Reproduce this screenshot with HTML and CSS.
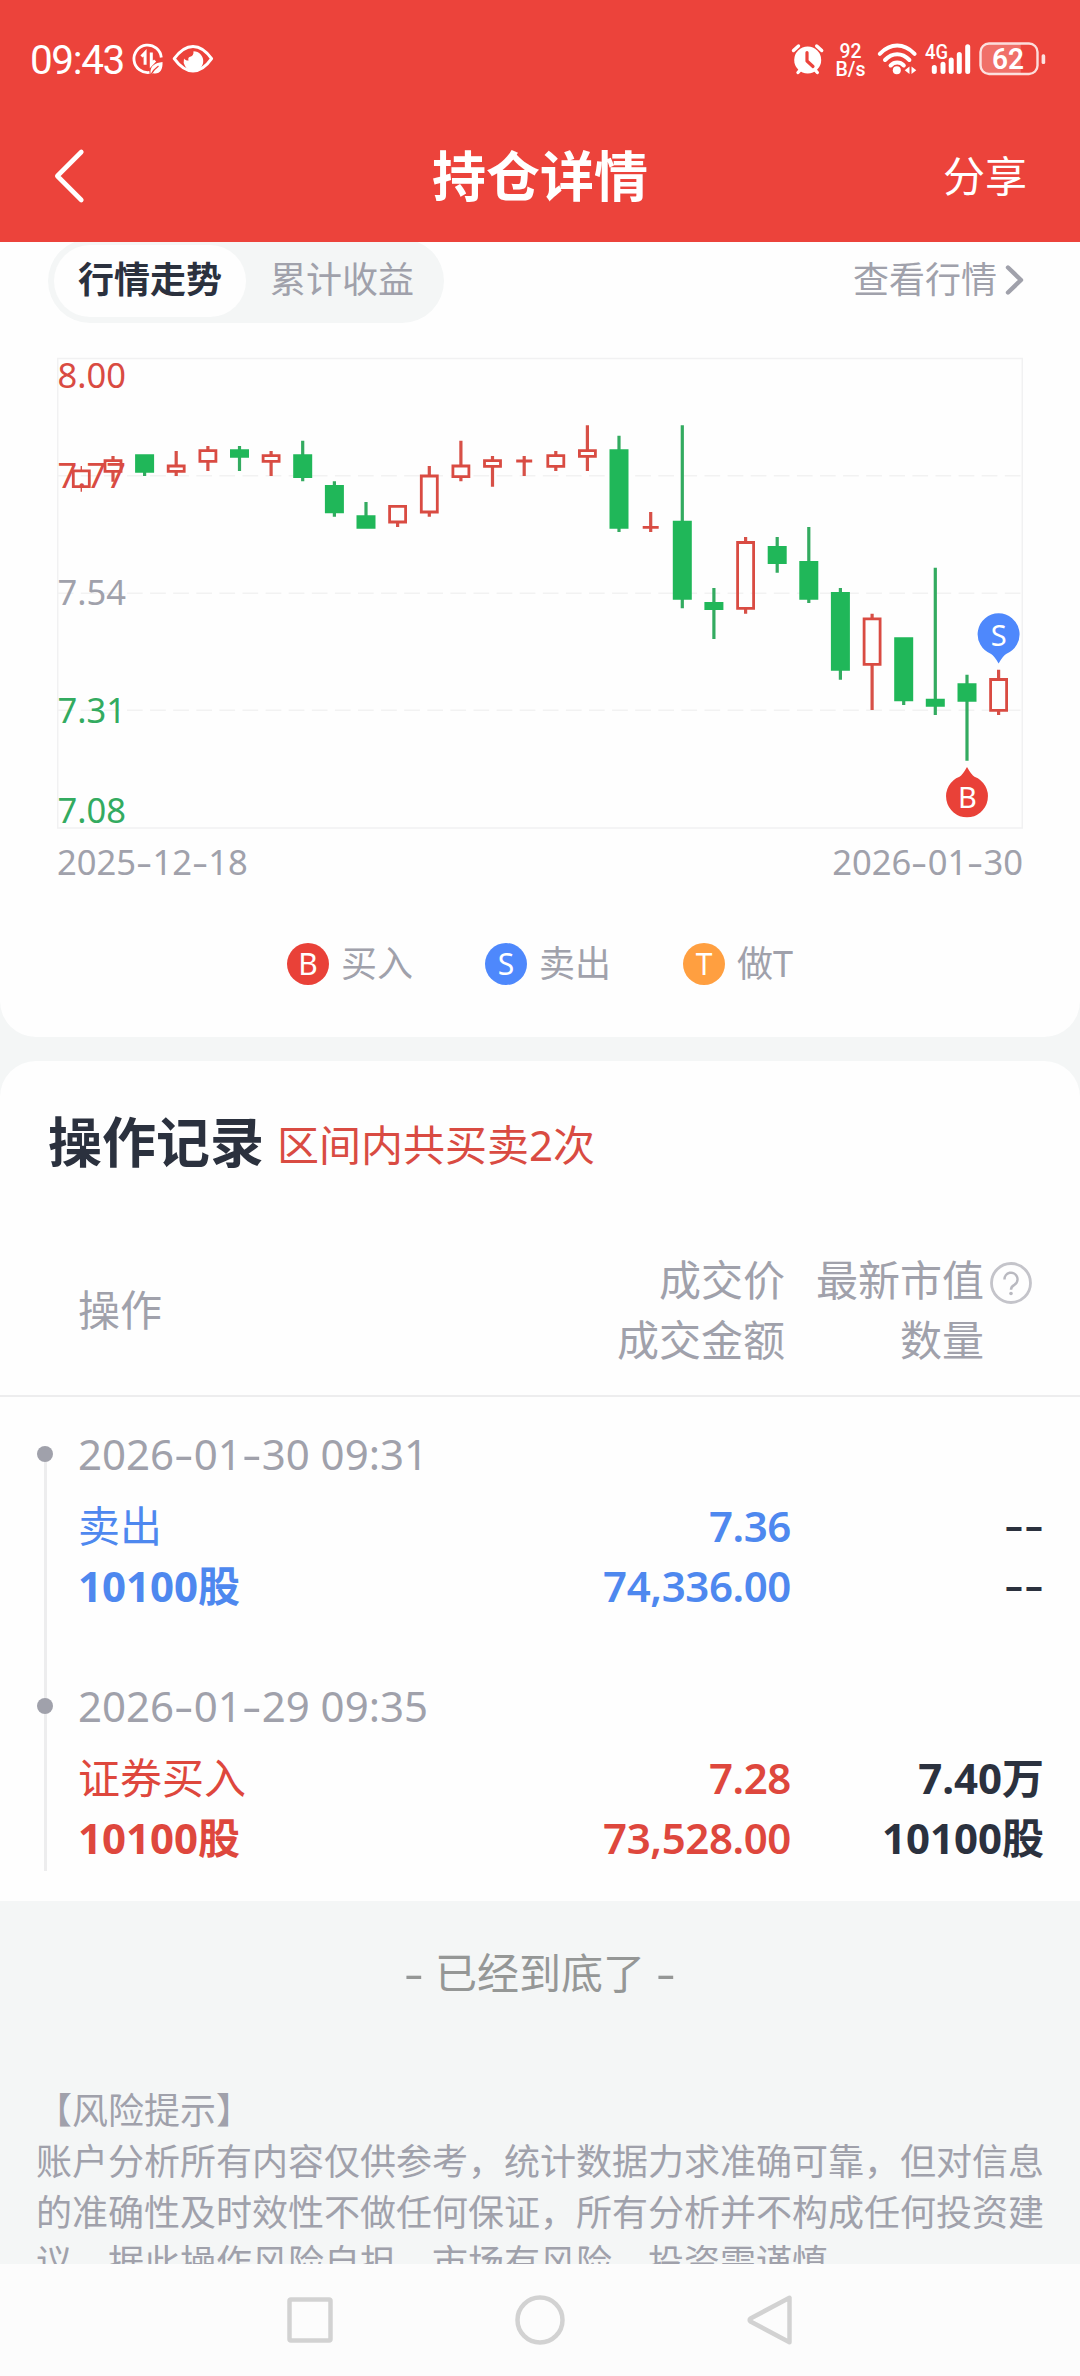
FILE: index.html
```
<!DOCTYPE html>
<html lang="zh-CN">
<head>
<meta charset="utf-8">
<title>持仓详情</title>
<link rel="stylesheet" href="styles.css">
</head>
<body>
<div class="screen">
  <header class="top">
    <div class="status">
      <div class="status-left">
        <span class="clock">09:43</span>
        <svg class="status-icons-left" width="90" height="40" viewBox="130 39 90 40">
          <g fill="none" stroke="#fff" stroke-width="2.8">
            <path d="M161.3 57.5A13.7 13.7 0 1 0 149.5 72.4"/>
            <path d="M141.5 56.5l3.6-3.8v12M151.3 52.5v12l3.8-4" stroke-width="3"/>
          </g>
          <path d="M150.5 73.5c-.5-8 4.500-10.500 12-11.500c.5 8-3 12.800-9.500 11.300l-1.500 1z" fill="#fff"/>
          <path d="M151 74.500c2-4 4-6 7.500-8.500" stroke="#ec433b" stroke-width="1.200" fill="none"/>
          <path d="M174.200 58.700Q183 46.500 193 46.500T211.600 58.700Q203 71 193 71T174.200 58.700z" fill="none" stroke="#fff" stroke-width="3" stroke-linejoin="round"/>
          <path d="M193.500 51.300a9.800 9.800 0 1 1-9.500 7.200c1.400 1.800 3.200 2.200 4.600 1.900c-1-2 .2-3.700 2.200-3.900c1.600-.2 2.900-2 2.700-5.200z" fill="#fff"/>
        </svg>
      </div>
      <svg class="status-right" width="264" height="44" viewBox="786 37 264 44">
        <g fill="none" stroke="#fff" stroke-width="3.400" stroke-linecap="round">
          <path d="M793.500 50.500l5-4.500M821.700 50.500l-5-4.500M798 72.500l3.500-4M817.300 72.500l-3.500-4"/>
        </g>
        <circle cx="807.700" cy="60" r="13.500" fill="#fff"/>
        <path d="M807 52.500v8.500l6 5.500" fill="none" stroke="#ec433b" stroke-width="3.200" stroke-linecap="round" stroke-linejoin="round"/>
        <g class="status-text">
          <text x="839.500" y="58.200" font-size="20" textLength="22" lengthAdjust="spacingAndGlyphs">92</text>
          <text x="835.500" y="75.500" font-size="19.500" textLength="30" lengthAdjust="spacingAndGlyphs">B/s</text>
          <text x="925" y="58.500" font-size="19.500" textLength="23" lengthAdjust="spacingAndGlyphs">4G</text>
        </g>
        <g fill="none" stroke="#fff" stroke-width="4" stroke-linecap="round">
          <path d="M879.800 53.800Q888 45.600 897.200 45.600T914.600 53.800"/>
          <path d="M885 60Q890.500 54.200 897.200 54.200T909.400 60"/>
          <path d="M890.600 65.500Q893.500 62.600 897.200 62.600T903.800 65.500"/>
        </g>
        <circle cx="896.800" cy="70.300" r="4" fill="#fff"/>
        <path d="M909.500 66.500v7.500l-4.800-3.700zM911.500 66.500v7.500l4.800-3.700z" fill="#fff"/>
        <path d="M934.300 67.500V71.500M943 64.200V71.500M951.200 60V71.500M959.300 54.500V71.500M967.700 46.800V71.500" stroke="#fff" stroke-width="5" stroke-linecap="round"/>
        <path d="M988 44H1020.700V73.500H988a7.500 7.500 0 0 1-7.500-7.500V51.500a7.500 7.500 0 0 1 7.500-7.500z" fill="#fff" fill-opacity=".24"/>
        <rect x="980.500" y="43.500" width="57" height="30.500" rx="8.500" fill="none" stroke="#fff" stroke-opacity=".82" stroke-width="2.400"/>
        <rect x="1041.600" y="54.300" width="3.600" height="9.700" rx="1.600" fill="#fff" fill-opacity=".85"/>
        <text class="battery-text" x="1008" y="69.300" font-size="29" text-anchor="middle" textLength="32" lengthAdjust="spacingAndGlyphs">62</text>
      </svg>
    </div>
    <nav class="titlebar">
      <svg class="back" width="32" height="56" viewBox="53 148 32 56"><path d="M81.300 152L57.300 176L81.300 200" fill="none" stroke="#fff" stroke-width="4.600" stroke-linecap="round" stroke-linejoin="round"/></svg>
      <h1 class="title">持仓详情</h1>
      <span class="share">分享</span>
    </nav>
  </header>

  <main class="content">
    <section class="card card-chart">
      <div class="tabs-row">
        <div class="tabs">
          <span class="tab tab-active">行情走势</span>
          <span class="tab">累计收益</span>
        </div>
        <a class="more">查看行情
          <svg width="20" height="32" viewBox="0 0 20 32"><path d="M3 3.500L16 16L3 28.500" fill="none" stroke="#a0a1ab" stroke-width="4.400" stroke-linecap="round" stroke-linejoin="round"/></svg>
        </a>
      </div>

      <svg class="chart" width="1080" height="514" viewBox="0 323 1080 514">
        <rect x="57.700" y="358.500" width="964.600" height="469.500" fill="none" stroke="#f1f1f2" stroke-width="1.500"/>
        <path d="M57.700 475.700H1022M57.700 593.300H1022M57.700 710.300H1022" stroke="#f2f2f2" stroke-width="1.500" stroke-dasharray="15.700 7.400" fill="none"/>

        <!-- falling days: wicks, then bodies -->
        <path stroke="#33ab60" stroke-width="3.200" d="M144.600 460V476M239.500 446V471M302.700 440.700V481.300M334.400 481.300V516.700M366 502V520M619 435.700V532M682.300 425.300V608.300M713.900 588V639M777.200 537V572.700M808.800 527V603M840.400 588V679.700M903.700 650V705M935.300 567.700V715M967 674.700V760.700"/>
        <path stroke="#20b759" stroke-width="19" d="M144.600 454.300V472.700M239.500 449.300V457.700M302.700 454.300V478M334.400 485V513.300M366 515.300V528.700M619 449.300V528.700M682.300 520.700V599.700M713.900 602V610M777.200 546V564M808.800 561V599.700M840.400 592V670.700M903.700 637.300V701.300M935.300 698.700V706.700M967 683.300V701.700"/>

        <!-- rising days: wicks, then hollow bodies -->
        <path stroke="#d75047" stroke-width="1.400" d="M81.300 466V470M81.300 484V491.700"/>
        <path stroke="#d75047" stroke-width="3.200" d="M113 456V460M113 472V481.700M176.200 451V465M176.200 472V476M207.900 446V450M207.900 462V471M271.100 451V455M271.100 462V476M397.600 522V527M429.300 466V475M429.300 513V516.700M460.900 440.700V465M460.900 477V481.300M492.500 456V460M492.500 467V486.700M524.200 456V476M555.800 451V455M555.800 467V471M587.400 425.300V450M587.400 457V471M650.700 512V532M745.600 537V542M745.600 609V613.700M872.100 613.700V618M872.100 665V710M998.600 669.700V679M998.600 711V715"/>
        <path stroke="#d94b42" stroke-width="2.800" fill="none" d="M73.300 470.800h16v15.800h-16zM105 460.600h16v10.800h-16zM168.200 466h16v5.400h-16zM199.900 450.600h16v10.800h-16zM263.100 455.600h16v5.800h-16zM389.600 506.300h16v15.700h-16zM421.300 476h16v36h-16zM452.900 466h16v10.700h-16zM484.500 460.600h16v5.800h-16zM516.200 461h16M547.800 455.600h16v10.800h-16zM579.400 450.600h16v5.800h-16zM642.700 527.300h16M737.600 542.500h16v65.900h-16zM864.100 618.800h16v45.600h-16zM990.600 679.500h16v30.900h-16z"/>

        <g class="axis">
          <text class="up" x="57.500" y="387.700">8.00</text>
          <text class="up" x="57.500" y="487.700">7.77</text>
          <text class="flat" x="57.500" y="604.700">7.54</text>
          <text class="down" x="57.500" y="722.700">7.31</text>
          <text class="down" x="57.500" y="822.700">7.08</text>
        </g>

        <g class="pin">
          <path fill="#4e88fc" d="M998.600 613.300a21 21 0 0 1 7.500 40.600q-3 1.500-7.500 9.600q-4.500-8.100-7.500-9.600a21 21 0 0 1 7.500-40.600z"/>
          <text x="998.600" y="645.500">S</text>
          <path fill="#e94138" d="M967 817.300a21 21 0 0 0 7.500-40.600q-3-1.500-7.500-9.600q-4.500 8.100-7.500 9.600a21 21 0 0 0 7.500 40.600z"/>
          <text x="967.500" y="807.500">B</text>
        </g>
      </svg>

      <div class="dates">
        <span>2025<i class="dash">-</i>12<i class="dash">-</i>18</span>
        <span>2026<i class="dash">-</i>01<i class="dash">-</i>30</span>
      </div>

      <div class="legend">
        <span class="legend-item"><b class="badge badge-buy">B</b>买入</span>
        <span class="legend-item"><b class="badge badge-sell">S</b>卖出</span>
        <span class="legend-item"><b class="badge badge-t">T</b>做T</span>
      </div>
    </section>

    <section class="card card-records">
      <div class="records-head">
        <h2 class="records-title">操作记录</h2>
        <span class="records-sub">区间内共买卖2次</span>
      </div>

      <div class="columns">
        <div class="col-op">操作</div>
        <div class="col-price"><span>成交价</span><span>成交金额</span></div>
        <div class="col-value"><span>最新市值</span><span>数量</span></div>
        <svg class="help" width="44" height="44" viewBox="0 0 44 44">
          <circle cx="22" cy="22" r="19.500" fill="none" stroke="#c4c4ca" stroke-width="2.800"/>
          <path d="M15.500 18.500a6.500 6.500 0 1 1 9.800 5.300q-3.300 1.800-3.300 5" fill="none" stroke="#b9b9c0" stroke-width="2.500"/>
          <circle cx="22" cy="32.500" r="1.800" fill="#b9b9c0"/>
        </svg>
      </div>

      <article class="entry entry-sell">
        <div class="rail rail-first"></div>
        <div class="entry-body">
          <div class="entry-time">2026<i class="dash">-</i>01<i class="dash">-</i>30 09:31</div>
          <div class="entry-grid">
            <span class="action">卖出</span><b class="num">7.36</b><b class="val"><i class="dash">-</i><i class="dash">-</i></b>
            <b class="num-left">10100股</b><b class="num">74,336.00</b><b class="val"><i class="dash">-</i><i class="dash">-</i></b>
          </div>
        </div>
      </article>
      <article class="entry entry-buy">
        <div class="rail rail-last"></div>
        <div class="entry-body">
          <div class="entry-time">2026<i class="dash">-</i>01<i class="dash">-</i>29 09:35</div>
          <div class="entry-grid">
            <span class="action">证券买入</span><b class="num">7.28</b><b class="val">7.40万</b>
            <b class="num-left">10100股</b><b class="num">73,528.00</b><b class="val">10100股</b>
          </div>
        </div>
      </article>
    </section>

    <p class="end"><i class="dash">-</i> 已经到底了 <i class="dash">-</i></p>
    <p class="risk">【风险提示】<br>账户分析所有内容仅供参考，统计数据力求准确可靠，但对信息<br>的准确性及时效性不做任何保证，所有分析并不构成任何投资建<br>议，据此操作风险自担，市场有风险，投资需谨慎。</p>
  </main>

  <footer class="navbar">
    <svg width="52" height="52" viewBox="0 0 52 52"><rect x="5.500" y="5.500" width="41" height="41" rx="1.500"/></svg>
    <svg width="52" height="52" viewBox="0 0 52 52"><circle cx="26" cy="26" r="22.500"/></svg>
    <svg width="52" height="52" viewBox="0 0 52 52"><path d="M45.500 3.800V48.200L6.500 27.500Q4.800 26 6.500 24.500z" stroke-linejoin="round"/></svg>
  </footer>
</div>
</body>
</html>
```
FILE: styles.css
```
* { box-sizing: border-box; margin: 0; padding: 0; }

body {
  width: 1080px;
  background: #f4f6f6;
  font-family: "Noto Sans", "Noto Sans CJK SC", sans-serif;
  font-size: 42px;
  line-height: 60px;
  color: #2b313e;
}

.screen {
  display: flex;
  flex-direction: column;
  width: 1080px;
  height: 2376px;
  overflow: hidden;
}

/* header */
.top {
  flex: none;
  height: 242px;
  background: #ec433b;
  color: #fff;
  position: relative;
  z-index: 1;
}

.status {
  display: flex;
  justify-content: space-between;
  height: 110px;
  padding: 37px 30px 0 30px;
}

.status-left { display: flex; align-items: flex-start; }
.clock {
  width: 100px;
  font-family: Roboto, sans-serif;
  font-size: 40.500px;
  line-height: 46px;
  letter-spacing: -1.400px;
}
.status-icons-left { margin-top: 2px; }
.status-text, .battery-text {
  fill: #fff;
  font-family: Roboto, sans-serif;
  font-weight: 500;
}
.battery-text { font-weight: 600; }

.titlebar {
  display: grid;
  grid-template-columns: 200px 1fr 200px;
  align-items: center;
  height: 132px;
  padding: 0 53px 0 53px;
}
.back { display: block; }
.title { font-size: 54px; font-weight: 700; line-height: 80px; text-align: center; }
.share { text-align: right; }

/* scroll area */
.content { flex: 1; min-height: 0; overflow: hidden; }
.card { background: #fefefe; }

.dash {
  display: inline-block;
  width: .47em;
  font-style: normal;
  text-align: center;
  transform: scaleX(1.45);
}

/* chart card */
.card-chart {
  height: 795px;
  border-radius: 0 0 36px 36px;
}
.tabs-row {
  display: flex;
  justify-content: space-between;
  align-items: center;
  height: 81px;
  padding: 0 55px 0 48px;
  font-size: 36px;
  color: #a0a1ab;
}
.tabs {
  display: flex;
  width: 396px;
  height: 84px;
  margin-top: -3px;
  padding: 6px;
  border-radius: 42px;
  background: #f4f6f6;
}
.tab {
  flex: 1;
  height: 72px;
  line-height: 70px;
  text-align: center;
}
.tab-active {
  border-radius: 36px;
  background: #fefefe;
  color: #2b313e;
  font-weight: 700;
}
.more {
  display: flex;
  align-items: center;
  gap: 8px;
  margin-top: -5px;
}
.chart { display: block; }
.axis text { font-size: 34.500px; }
.axis .up { fill: #d94b42; }
.axis .flat { fill: #a0a1ab; }
.axis .down { fill: #33ab60; }
.pin text { fill: #fff; font-size: 29px; text-anchor: middle; }

.dates {
  display: flex;
  justify-content: space-between;
  height: 50px;
  padding: 0 57px 0 57px;
  font-size: 34.600px;
  line-height: 50px;
  color: #a0a1ab;
}
.legend {
  display: flex;
  justify-content: center;
  gap: 72px;
  padding-top: 47px;
  font-size: 36px;
  color: #a0a1ab;
}
.legend-item { display: flex; align-items: center; gap: 12px; }
.badge {
  width: 42px;
  height: 42px;
  border-radius: 50%;
  color: #fff;
  font-size: 30px;
  font-weight: 400;
  line-height: 42px;
  text-align: center;
}
.badge-buy { background: #e94138; }
.badge-sell { background: #4e88fc; }
.badge-t { background: #ff9f40; }

/* records card */
.card-records {
  height: 840px;
  margin-top: 24px;
  border-radius: 36px 36px 0 0;
}
.records-head {
  display: flex;
  align-items: flex-start;
  gap: 13px;
  height: 189px;
  padding: 41px 48px 0;
}
.records-title { font-size: 54px; font-weight: 700; line-height: 80px; }
.records-sub { line-height: 86px; color: #d94b42; }

.columns {
  display: grid;
  grid-template-columns: 320px 387px 199px 1fr;
  height: 147px;
  padding-left: 78px;
  border-bottom: 2px solid #ededee;
  color: #a0a1ab;
}
.col-op { line-height: 120px; }
.col-price, .col-value { display: flex; flex-direction: column; text-align: right; }
.help { margin: 11px 0 0 5px; }

.entry { display: flex; height: 252px; }
.rail {
  position: relative;
  flex: none;
  width: 3px;
  margin: 0 31px 0 44px;
  background: #ededee;
}
.rail-first { margin-top: 57px; }
.rail-last { margin-bottom: 30px; }
.rail::before {
  content: "";
  position: absolute;
  left: -7px;
  top: 49px;
  width: 16px;
  height: 16px;
  border-radius: 50%;
  background: #a0a1ab;
}
.rail-first::before { top: -8px; }
.entry-body { padding-top: 27px; }
.entry-time { color: #a0a1ab; margin-bottom: 12px; }
.entry-grid {
  display: grid;
  grid-template-columns: 320px 393px 253px;
}
.entry-grid b { font-weight: 700; }
.entry-grid .num { font-weight: 600; letter-spacing: -.4px; }
.num, .val { text-align: right; }
.val { color: #2b313e; }
.val .dash {
  width: 20px;
  font-weight: 600;
  transform: translateY(-1px) scale(1.4, .9);
}
.entry-sell .action, .entry-sell .num, .entry-sell .num-left { color: #4e88ef; }
.entry-buy .action, .entry-buy .num, .entry-buy .num-left { color: #de473d; }

/* page end */
.end {
  padding: 42px 0 0;
  text-align: center;
  color: #959796;
}
.risk {
  padding: 83px 36px 0;
  font-size: 36px;
  line-height: 50.800px;
  color: #a0a1ab;
  white-space: nowrap;
}

.navbar {
  flex: none;
  display: flex;
  justify-content: center;
  align-items: center;
  gap: 178px;
  height: 112px;
  background: #fcfcfc;
}
.navbar svg { fill: none; stroke: #d2d2d2; stroke-width: 4.500; }
```
